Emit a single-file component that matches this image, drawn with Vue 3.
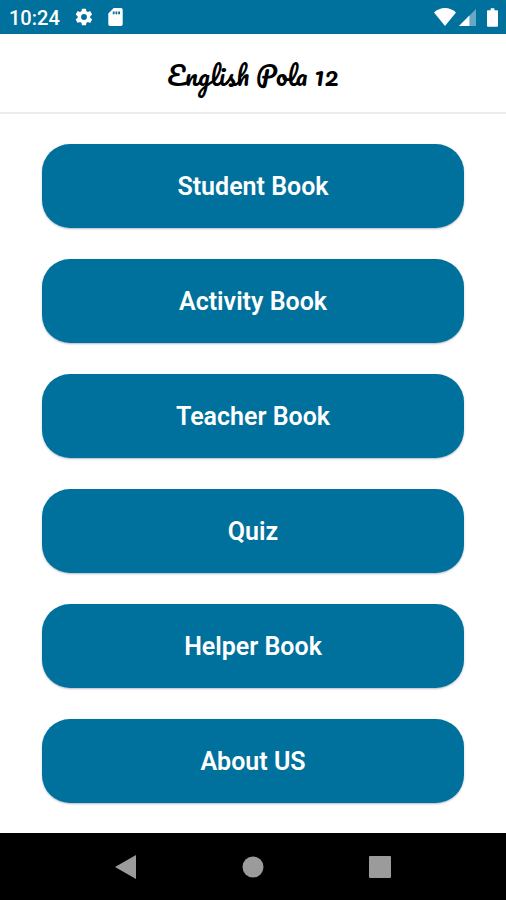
<script setup>
const entries = ['Student Book', 'Activity Book', 'Teacher Book', 'Quiz', 'Helper Book', 'About US']
</script>

<template>
  <div class="screen">
    <div class="status">
      <time class="clock">10:24</time>
      <svg class="gear" viewBox="0 0 24 24" aria-hidden="true">
        <path d="M19.4 13c0-.3.1-.6.1-1s0-.7-.1-1l2.1-1.7c.2-.1.2-.4.1-.6l-2-3.5c-.1-.2-.4-.3-.6-.2l-2.5 1a7.5 7.5 0 0 0-1.7-1l-.4-2.6a.5.5 0 0 0-.5-.4h-4a.5.5 0 0 0-.5.4L9 5a7.5 7.5 0 0 0-1.7 1l-2.5-1c-.2-.1-.5 0-.6.2l-2 3.5c-.1.2-.1.5.1.6l2.1 1.7a7 7 0 0 0 0 2l-2.1 1.7c-.2.1-.2.4-.1.6l2 3.5c.1.2.4.3.6.2l2.5-1c.5.4 1.1.7 1.7 1l.4 2.6c0 .2.2.4.5.4h4c.3 0 .5-.2.5-.4l.4-2.6a7.5 7.5 0 0 0 1.7-1l2.5 1c.2.1.5 0 .6-.2l2-3.5c.1-.2.1-.5-.1-.6zM12 15.5a3.5 3.5 0 1 1 0-7 3.5 3.5 0 0 1 0 7z" />
      </svg>
      <svg class="card" viewBox="0 0 16 20" aria-hidden="true">
        <path fill-rule="evenodd" d="M6 0h8a2 2 0 0 1 2 2v16a2 2 0 0 1-2 2H2a2 2 0 0 1-2-2V6zM5 4v3h2V4zm3 0v3h2V4zm3 0v3h2V4z" />
      </svg>
      <span class="spacer"></span>
      <svg class="wifi" viewBox="0 0 22 18" aria-hidden="true">
        <path d="M11 18 0 4.5C3 1.5 7 0 11 0s8 1.5 11 4.5z" />
      </svg>
      <svg class="signal" viewBox="0 0 18 18" aria-hidden="true">
        <path opacity=".4" d="M0 18 18 0v18z" />
        <path d="M0 18 11 7v11z" />
      </svg>
      <svg class="battery" viewBox="0 0 12 20" aria-hidden="true">
        <path d="M4 0h4v2h3a1 1 0 0 1 1 1v16a1 1 0 0 1-1 1H1a1 1 0 0 1-1-1V3a1 1 0 0 1 1-1h3z" />
      </svg>
    </div>

    <header class="header">
      <h1 class="title">English Pola 12</h1>
    </header>

    <main class="menu">
      <button v-for="entry in entries" :key="entry" type="button" class="entry">{{ entry }}</button>
    </main>

    <nav class="nav">
      <button type="button" class="key" aria-label="Back">
        <svg viewBox="0 0 24 24"><path d="M1 12 22 0v24z" /></svg>
      </button>
      <button type="button" class="key" aria-label="Home">
        <svg viewBox="0 0 24 24"><circle cx="12" cy="12" r="10.5" /></svg>
      </button>
      <button type="button" class="key" aria-label="Recent apps">
        <svg viewBox="0 0 24 24"><rect x="1" y="1" width="22" height="22" rx="1" /></svg>
      </button>
    </nav>
  </div>
</template>

<style>
body {
  margin: 0;
  background: #fff;
}
</style>

<style scoped>
.screen {
  display: flex;
  flex-direction: column;
  min-height: 100vh;
  font-family: Roboto, "Liberation Sans", sans-serif;
}
.status {
  display: flex;
  align-items: center;
  box-sizing: border-box;
  height: 34px;
  padding: 0 8px 0 9px;
  background: #00719c;
  color: #fff;
}
.status svg {
  fill: #fff;
}
.clock {
  font-size: 20px;
  font-weight: 500;
  line-height: 34px;
  padding-top: 2px;
}
.gear {
  width: 20px;
  height: 20px;
  margin-left: 14px;
}
.card {
  width: 15px;
  height: 18px;
  margin-left: 14px;
}
.spacer {
  flex: 1;
}
.wifi {
  width: 22px;
  height: 18px;
}
.signal {
  width: 17px;
  height: 17px;
  margin-left: 3px;
}
.battery {
  width: 11px;
  height: 19px;
  margin-left: 11px;
}
.header {
  display: flex;
  align-items: center;
  justify-content: center;
  box-sizing: border-box;
  height: 80px;
  padding-top: 4px;
  border-bottom: 2px solid #ececec;
}
.title {
  margin: 0;
  color: #000;
  font-family: Pacifico, cursive;
  font-size: 26px;
  font-weight: 400;
  line-height: 40px;
}
.menu {
  display: flex;
  flex: 1;
  flex-direction: column;
  gap: 31px;
  padding: 30px 42px;
}
.entry {
  height: 84px;
  padding: 2px 0 0;
  border: 0;
  border-radius: 28px;
  background: #00719c;
  box-shadow: 0 1px 2px rgba(0, 30, 80, 0.3);
  color: #fff;
  font-family: inherit;
  font-size: 25px;
  font-weight: 600;
  line-height: 32px;
}
.nav {
  display: flex;
  align-items: center;
  justify-content: center;
  gap: 103px;
  height: 67px;
  background: #000;
}
.key {
  display: flex;
  padding: 0;
  border: 0;
  background: none;
}
.key svg {
  width: 24px;
  height: 24px;
  fill: #9b9b9b;
}
</style>
